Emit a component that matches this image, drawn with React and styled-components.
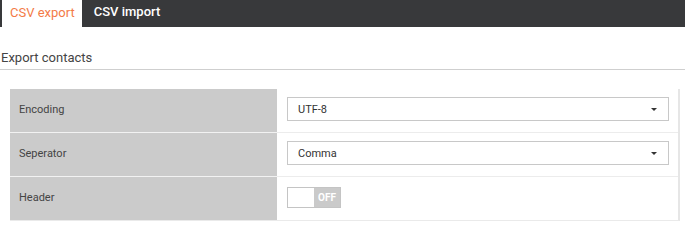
import React from 'react';
import styled, { createGlobalStyle } from 'styled-components';

const GlobalStyle = createGlobalStyle`
  body {
    margin: 0;
    background: #fff;
    font-family: Roboto, "Liberation Sans", Arial, sans-serif;
    color: #333;
  }
`;

const Page = styled.div`
  width: 685px;
`;

const TabBar = styled.div`
  display: flex;
  height: 27px;
  background: #38393b;
  padding-left: 2px;
`;

const Tab = styled.div`
  display: flex;
  align-items: center;
  padding: 0 ${p => (p.active ? 7 : 12)}px ${p => (p.active ? 2 : 4)}px ${p => (p.active ? 8 : 12)}px;
  font-size: 13px;
  font-weight: ${p => (p.active ? 400 : 500)};
  background: ${p => (p.active ? '#fff' : 'transparent')};
  color: ${p => (p.active ? '#f37b47' : '#fff')};
`;

const Section = styled.div`
  padding-top: 23px;
`;

const SectionTitle = styled.h3`
  margin: 0;
  padding: 0 0 4px 1px;
  font-size: 13px;
  font-weight: 400;
  color: #444;
  border-bottom: 1px solid #cfcfcf;
`;

const Table = styled.div`
  margin: 19px 5px 0 10px;
  border-right: 2px solid #e6e6e6;
  border-bottom: 1px solid #eaeaea;
`;

const Row = styled.div`
  display: grid;
  grid-template-columns: 267px 1fr;
  height: 43px;
  & + & {
    border-top: 1px solid #ececec;
  }
`;

const Label = styled.div`
  display: flex;
  align-items: center;
  padding: 0 0 2px 9px;
  background: #cbcbcb;
  font-size: 11px;
  color: #444;
  ${Row} + ${Row} & {
    box-shadow: 0 -1px 0 #f2f2f2;
  }
`;

const Cell = styled.div`
  display: flex;
  align-items: center;
  padding: 0 9px 3px 10px;
`;

const Select = styled.div`
  flex: 1;
  height: 22px;
  display: flex;
  align-items: center;
  justify-content: space-between;
  padding: 0 11px 0 10px;
  border: 1px solid #c8c8c8;
  font-size: 11px;
  color: #333;
`;

const Caret = styled.span`
  width: 0;
  height: 0;
  border-left: 3px solid transparent;
  border-right: 3px solid transparent;
  border-top: 3px solid #333;
`;

const Toggle = styled.div`
  display: flex;
  width: 54px;
  height: 21px;
  border: 1px solid #c4c4c4;
  box-sizing: border-box;
  margin-top: 1px;
`;

const Knob = styled.span`
  width: 26px;
  background: #fff;
`;

const ToggleText = styled.span`
  flex: 1;
  display: flex;
  align-items: center;
  justify-content: center;
  background: #cacaca;
  color: #fff;
  font-size: 10px;
  font-weight: 700;
`;

const rows = [
  { label: 'Encoding', value: 'UTF-8' },
  { label: 'Seperator', value: 'Comma' },
];

export default function App() {
  return (
    <Page>
      <GlobalStyle />
      <TabBar>
        <Tab active>CSV export</Tab>
        <Tab>CSV import</Tab>
      </TabBar>
      <Section>
        <SectionTitle>Export contacts</SectionTitle>
        <Table>
          {rows.map(r => (
            <Row key={r.label}>
              <Label>{r.label}</Label>
              <Cell>
                <Select>
                  {r.value}
                  <Caret />
                </Select>
              </Cell>
            </Row>
          ))}
          <Row>
            <Label>Header</Label>
            <Cell>
              <Toggle>
                <Knob />
                <ToggleText>OFF</ToggleText>
              </Toggle>
            </Cell>
          </Row>
        </Table>
      </Section>
    </Page>
  );
}
